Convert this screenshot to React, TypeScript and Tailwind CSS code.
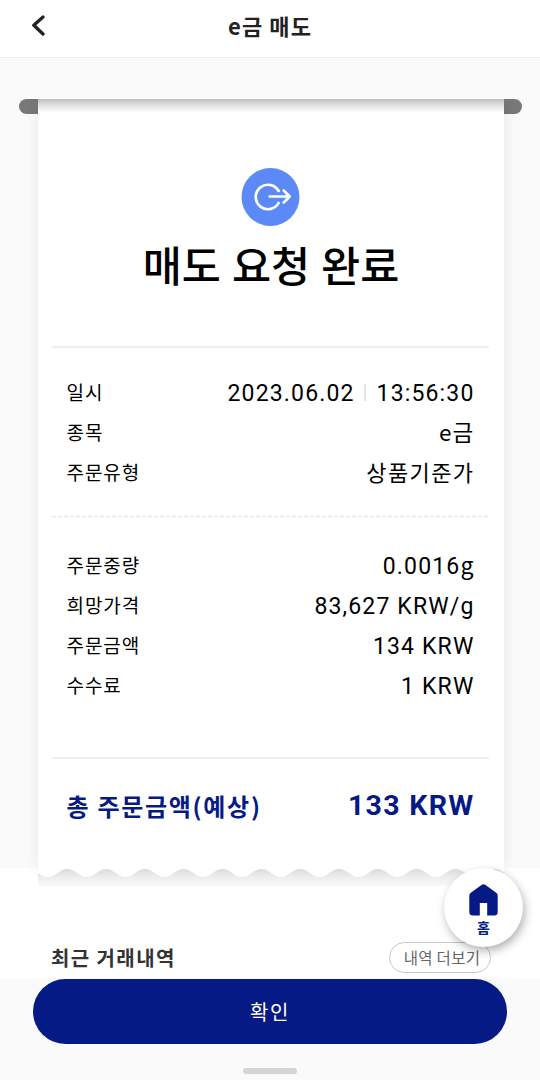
import type { ReactNode } from "react";

const CARD_WIDTH = 466;
const WAVE_COUNT = 12;

function wavePath() {
  const period = CARD_WIDTH / WAVE_COUNT;
  const half = period / 2;
  let x = 9.8 - period;
  let d = `M${x} 0V10`;
  for (let i = 0; i <= WAVE_COUNT; i++) {
    d += `C${x + 8} 10 ${x + half - 8} 2 ${x + half} 2`;
    d += `C${x + half + 8} 2 ${x + period - 8} 10 ${x + period} 10`;
    x += period;
  }
  d += `C${x + 8} 10 ${x + half - 8} 2 ${x + half} 2V0Z`;
  return d;
}

function Row({ label, children }: { label: string; children: ReactNode }) {
  return (
    <div className="flex h-10 items-start justify-between">
      <span className="-mt-[1px] text-[19px] leading-10 tracking-[0.9px]">{label}</span>
      <span className="block pt-[1px] font-[Roboto,'Noto_Sans_CJK_KR',sans-serif] text-[23px] leading-10 tracking-[1.15px] whitespace-nowrap">
        {children}
      </span>
    </div>
  );
}

function Header() {
  return (
    <header className="relative z-20 flex h-[58px] items-center justify-center border-b border-[#ededed] bg-white">
      <button className="absolute top-[15px] left-[31px]" aria-label="뒤로">
        <svg width="15" height="21" viewBox="0 0 15 21" fill="none" stroke="#222" strokeWidth="3.3" strokeLinecap="round" strokeLinejoin="round">
          <path d="M12 2L2.8 10.3L12 19" />
        </svg>
      </button>
      <h1 className="mt-[-6px] text-[22px] font-bold tracking-[1.1px] text-[#222]">e금 매도</h1>
    </header>
  );
}

function Receipt() {
  return (
    <div className="relative z-10">
      <div className="ml-[19px] h-[14.5px] w-[503px] rounded-full bg-[#787878]" />
      <div className="-mt-[14.5px] ml-[37.5px] w-[466px]">
        <div className="h-[768px] bg-white px-[14.5px] shadow-[0_0_16px_rgba(0,0,0,0.08)] [clip-path:inset(0_-9px_-8px_-9px)]">
          <div className="-mx-[14.5px] h-[14px] bg-linear-to-b from-[#bcbcbc] via-[#dfdfdf] via-40% to-white" />
          <div className="flex h-[233px] flex-col items-center pt-[55px]">
            <svg className="overflow-visible" width="58" height="58" viewBox="0.5 0 58 58" fill="none" stroke="white" strokeWidth="2.7" strokeLinecap="round" strokeLinejoin="round">
              <circle cx="29" cy="29" r="29" fill="#5b8af6" stroke="none" />
              <path strokeLinecap="butt" d="M37.6 24A12.2 12.2 0 1 0 37.6 34" />
              <path d="M28.2 28.5H48M42.2 22.5L48.2 28.5L42.2 34.5" />
            </svg>
            <h2 className="mt-[8px] ml-[1px] text-[42.5px] leading-[60px] font-medium [word-spacing:1.4px]">매도 요청 완료</h2>
          </div>
          <section className="h-[169px] border-t-2 border-[#eeeeee] px-[14.5px] pt-[25px]">
            <Row label="일시">
              2023.06.02
              <i className="mr-[11px] ml-[9px] inline-block h-[17px] w-[2px] bg-[#e4e4e4]" />
              13:56:30
            </Row>
            <Row label="종목">
              <span className="font-['Noto_Sans_CJK_KR',sans-serif] text-[22.5px] leading-none tracking-[1.2px]">e금</span>
            </Row>
            <Row label="주문유형">
              <span className="font-['Noto_Sans_CJK_KR',sans-serif] text-[22px] leading-none tracking-[1.4px]">상품기준가</span>
            </Row>
          </section>
          <svg className="block overflow-visible" width="437" height="2">
            <path d="M0 1.6H437" stroke="#ededed" strokeWidth="1.8" strokeDasharray="4 2" />
          </svg>
          <section className="h-[240px] px-[14.5px] pt-[28.5px]">
            <Row label="주문중량">
              0.0016<span className="font-['Noto_Sans_CJK_KR',sans-serif] leading-none">g</span>
            </Row>
            <Row label="희망가격">83,627 KRW/g</Row>
            <Row label="주문금액">134 KRW</Row>
            <Row label="수수료">1 KRW</Row>
          </section>
          <section className="flex items-center justify-between border-t-2 border-[#eeeeee] px-[14.5px] pt-[27px] leading-10 font-bold text-[#061a86]">
            <span className="text-[24px] tracking-[1.7px]">총 주문금액(예상)</span>
            <span className="font-[Roboto,sans-serif] text-[28.5px] tracking-[1.3px]">133 KRW</span>
          </section>
        </div>
        <svg className="relative block" width="466" height="19" viewBox="0 0 466 19">
          <defs>
            <linearGradient id="under" x1="0" y1="0" x2="0" y2="1">
              <stop offset="0" stopColor="#d6d6d6" />
              <stop offset="0.5" stopColor="#ececec" />
              <stop offset="1" stopColor="#fafafa" />
            </linearGradient>
          </defs>
          <rect width="466" height="19" fill="url(#under)" />
          <path d={wavePath()} fill="white" />
        </svg>
      </div>
    </div>
  );
}

export default function App() {
  return (
    <div className="relative flex h-[1080px] w-[540px] flex-col overflow-hidden bg-[#fafafa] font-['Noto_Sans_CJK_KR',sans-serif] text-black">
      <Header />
      <main className="h-[810px] shrink-0 pt-[41px]">
        <Receipt />
      </main>
      <section className="flex h-[110px] shrink-0 items-end justify-between bg-white pr-[49px] pb-[5px] pl-[51px]">
        <h3 className="text-[20px] leading-[30px] font-bold tracking-[1.4px] text-[#333]">최근 거래내역</h3>
        <button className="h-[31px] w-[102px] rounded-full border border-[#c8c8c8] pl-[4px] text-[15.5px] leading-[29px] tracking-[0.3px] text-[#666]">내역 더보기</button>
      </section>
      <footer className="flex h-[102px] shrink-0 flex-col items-center pt-[0.5px]">
        <button className="h-[65.5px] w-[474px] rounded-full bg-[#061a86] pt-[2px] text-[20px] tracking-[1.5px] text-white">확인</button>
        <div className="mt-[24px] h-[6px] w-[54px] rounded-full bg-[#d4d4d4]" />
      </footer>
      <button className="absolute top-[868px] left-[444px] z-20 flex h-[79px] w-[79px] flex-col items-center rounded-full bg-white pt-[15.5px] text-[#061a86] shadow-[2px_4px_10px_rgba(0,0,0,0.3)]">
        <svg width="29" height="32" viewBox="0 0 29 32" fill="currentColor">
          <path d="M12.8 .8Q14.5-.4 16.2 .8L27.2 8.8Q28.7 9.9 28.7 11.8V28Q28.7 31.5 25.2 31.5H18.2V19H10.8V31.5H3.8Q.3 31.5 .3 28V11.8Q.3 9.9 1.8 8.8Z" />
        </svg>
        <span className="mt-[1px] text-[14px] leading-[20px] font-bold">홈</span>
      </button>
    </div>
  );
}
